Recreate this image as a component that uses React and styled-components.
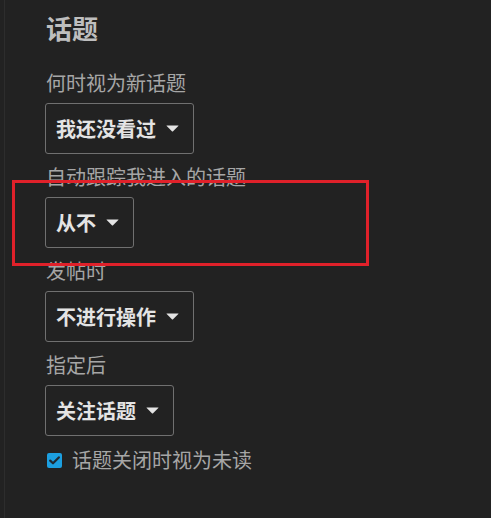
import React from 'react';
import styled, { createGlobalStyle } from 'styled-components';

const GlobalStyle = createGlobalStyle`
  html, body {
    margin: 0;
    padding: 0;
    background: #222222;
  }
  body {
    font-family: "Noto Sans CJK SC", "Noto Sans", sans-serif;
  }
`;

const Page = styled.div`
  position: relative;
  min-height: 100vh;
  box-sizing: border-box;
  margin-left: 4px;
  padding: 12px 0 0 40px;
  border-left: 1px solid #2d2d2d;
  background: #222222;
`;

const Title = styled.h2`
  margin: 0 0 16px 1px;
  font-size: 26px;
  line-height: 32px;
  font-weight: 700;
  color: #bebebe;
`;

const Setting = styled.div`
  display: flex;
  flex-direction: column;
  align-items: flex-start;
`;

const Label = styled.div`
  margin: 10px 0 7px 1px;
  font-size: 20px;
  line-height: 26px;
  color: #a6a6a6;
`;

const Select = styled.button`
  display: flex;
  align-items: center;
  gap: 10px;
  height: 51px;
  box-sizing: border-box;
  padding: 0 14px 0 10px;
  border: 1px solid #707070;
  border-radius: 3px;
  background: transparent;
  color: #e4e4e4;
  font-family: inherit;
  font-size: 20px;
  font-weight: 700;
  line-height: 26px;
  cursor: pointer;
`;

const Caret = styled.svg`
  width: 13px;
  height: 7px;
  flex: none;
`;

const CheckRow = styled.label`
  display: flex;
  align-items: center;
  gap: 10px;
  margin-top: 11px;
  padding-left: 2px;
  font-size: 20px;
  line-height: 26px;
  color: #a6a6a6;
`;

const Box = styled.span`
  display: flex;
  align-items: center;
  justify-content: center;
  width: 15px;
  height: 15px;
  border-radius: 2px;
  background: #1c9fe0;
`;

const Highlight = styled.div`
  position: absolute;
  left: 7px;
  top: 180px;
  width: 357px;
  height: 86px;
  box-sizing: border-box;
  border: 3px solid #e0212a;
  pointer-events: none;
`;

const settings = [
  { label: '何时视为新话题', value: '我还没看过' },
  { label: '自动跟踪我进入的话题', value: '从不' },
  { label: '发帖时', value: '不进行操作' },
  { label: '指定后', value: '关注话题' },
];

const Dropdown = ({ value }) => (
  <Select type="button">
    {value}
    <Caret viewBox="0 0 13 7">
      <path d="M0.9 0.4 H12.1 Q12.9 0.4 12.3 1.1 L7.1 6.3 Q6.5 6.9 5.9 6.3 L0.7 1.1 Q0.1 0.4 0.9 0.4 Z" fill="#e4e4e4" />
    </Caret>
  </Select>
);

const App = () => (
  <>
    <GlobalStyle />
    <Page>
      <Title>话题</Title>
      {settings.map(s => (
        <Setting key={s.label}>
          <Label>{s.label}</Label>
          <Dropdown value={s.value} />
        </Setting>
      ))}
      <CheckRow>
        <Box>
          <svg width="11" height="9" viewBox="0 0 11 9">
            <path d="M1.2 4.6 L4 7.3 L9.8 1.4" fill="none" stroke="#1f2a33" strokeWidth="2.2" strokeLinecap="round" strokeLinejoin="round" />
          </svg>
        </Box>
        话题关闭时视为未读
      </CheckRow>
      <Highlight />
    </Page>
  </>
);

export default App;
